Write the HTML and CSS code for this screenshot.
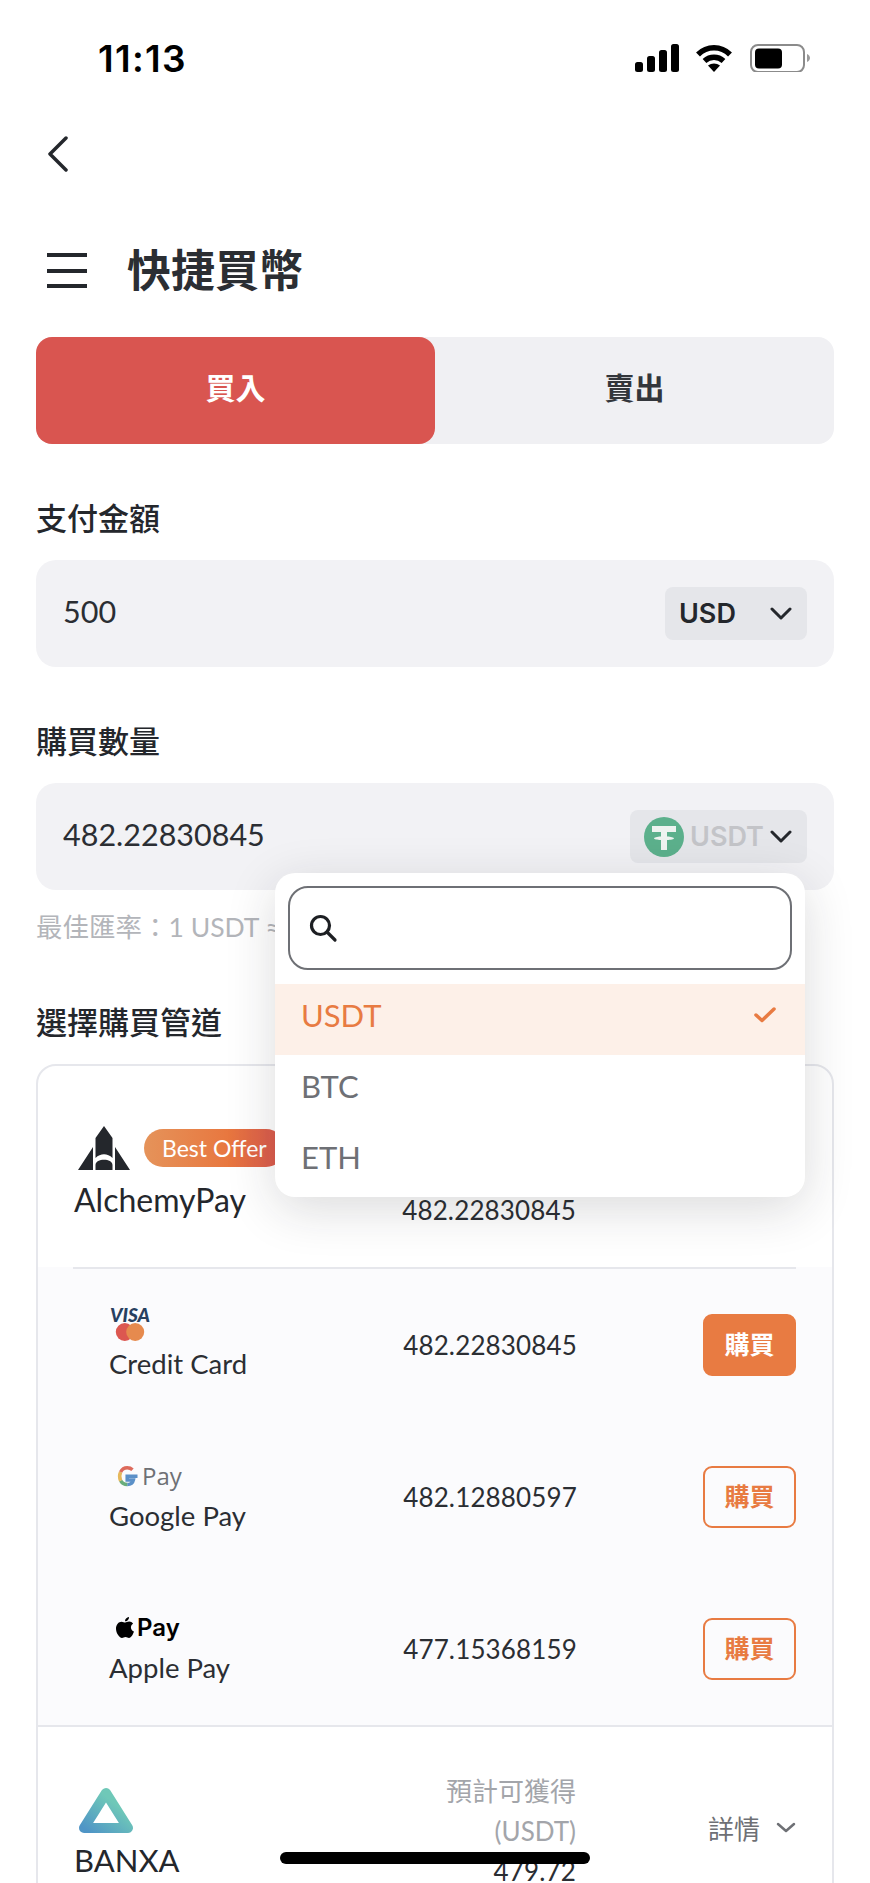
FILE: index.html
```html
<!DOCTYPE html>
<html lang="zh-Hant">
<head>
    <meta charset="UTF-8">
    <meta name="viewport" content="width=device-width, initial-scale=1.0">
    <title>快捷買幣</title>
    <link rel="stylesheet" href="styles.css">
</head>
<body>
<div class="phone">

    <div class="status">
        <span class="time">11:13</span>
        <div class="status-icons">
            <svg width="44" height="28" viewBox="0 0 44 28"><rect x="0" y="18" width="8" height="10" rx="2.500"/><rect x="12" y="12" width="8" height="16" rx="2.500"/><rect x="24" y="6" width="8" height="22" rx="2.500"/><rect x="36" y="0" width="8" height="28" rx="2.500"/></svg>
            <svg width="38" height="28" viewBox="0 0 38 28"><path d="M3 10.500C12 1.500 26 1.500 35 10.500" fill="none" stroke="#000" stroke-width="5.500"/><path d="M9.500 17c5.500-5 13.500-5 19 0" fill="none" stroke="#000" stroke-width="5.500"/><path d="M13 21.500c3.500-2.800 8.500-2.800 12 0L19 28z"/></svg>
            <svg width="62" height="28" viewBox="0 0 62 28"><rect x="2" y="1" width="53" height="27" rx="7" fill="none" stroke="#8b8b8b" stroke-width="2"/><rect x="6" y="4.500" width="27" height="20" rx="4"/><path d="M58 10c2 1 3 2.500 3 4s-1 3-3 4z" fill="#9a9a9a"/></svg>
        </div>
    </div>

    <div class="back">
        <svg width="22" height="36" viewBox="0 0 22 36"><path d="M19 2L3 18l16 16" fill="none" stroke="#24272c" stroke-width="3.500" stroke-linecap="round" stroke-linejoin="round"/></svg>
    </div>

    <div class="title-row">
        <div class="burger"><span></span><span></span><span></span></div>
        <h1>快捷買幣</h1>
    </div>

    <div class="tabs">
        <div class="tab active">買入</div>
        <div class="tab">賣出</div>
    </div>

    <div class="label">支付金額</div>
    <div class="field">
        <span class="value">500</span>
        <div class="picker usd">
            <b>USD</b>
            <svg class="chev" width="22" height="14" viewBox="0 0 22 14"><path d="M2 2l9 9 9-9" fill="none" stroke="#24272c" stroke-width="3" stroke-linecap="round" stroke-linejoin="round"/></svg>
        </div>
    </div>

    <div class="label second">購買數量</div>
    <div class="field">
        <span class="value">482.22830845</span>
        <div class="picker usdt">
            <svg width="40" height="40" viewBox="0 0 40 40"><circle cx="20" cy="20" r="20" fill="#5cb08c"/><path d="M8 9h24v6H23v4.500c4 .2 7 .9 7 1.800s-3 1.600-7 1.800V33h-6v-9.900c-4-.2-7-.9-7-1.800s3-1.600 7-1.800V15H8z" fill="#eef3f0"/></svg>
            <b>USDT</b>
            <svg class="chev" width="22" height="14" viewBox="0 0 22 14"><path d="M2 2l9 9 9-9" fill="none" stroke="#24272c" stroke-width="3" stroke-linecap="round" stroke-linejoin="round"/></svg>
        </div>
    </div>
    <div class="rate">最佳匯率：1 USDT ≈ 1.0369 USD</div>

    <div class="label third">選擇購買管道</div>

    <div class="card">
        <div class="provider first">
            <div class="brand">
                <div class="logo-line">
                    <svg width="52" height="44" viewBox="0 0 52 44"><path d="M26 0l8.500 12v20c-5-5-12-5-17 0V12z" fill="#24272c"/><path d="M17.500 44v-5c0-7 17-7 17 0v5zM15 21v23H0zM37 21v23h15z" fill="#24272c"/></svg>
                    <span class="badge">Best Offer</span>
                </div>
                <div class="brand-name">AlchemyPay</div>
            </div>
            <div class="amount">
                <span class="muted">預計可獲得</span>
                <span class="muted">(USDT)</span>
                <span class="num">482.22830845</span>
            </div>
            <div class="detail"></div>
        </div>

        <div class="methods">
            <div class="method">
                <div class="method-name">
                    <div class="method-logo visa">
                        <i>VISA</i>
                        <svg width="30" height="19" viewBox="0 0 30 19"><circle cx="9.500" cy="9.500" r="9.500" fill="#dc5750"/><circle cx="20.500" cy="9.500" r="9.500" fill="#e68a4e"/></svg>
                    </div>
                    <span>Credit Card</span>
                </div>
                <span class="num">482.22830845</span>
                <button class="buy solid">購買</button>
            </div>
            <div class="method">
                <div class="method-name">
                    <div class="method-logo">
                        <svg width="24" height="24" viewBox="0 0 24 24"><path d="M22.500 12.200h-10.300v3.800h6.200c-.6 2.900-3 4.500-6.200 4.500" fill="none" stroke="#5b90c8" stroke-width="3.500"/><path d="M12.200 20.500c-2.900 0-5.300-1.500-6.600-3.800" fill="none" stroke="#69ad7c" stroke-width="3.500"/><path d="M5.600 16.700c-1.300-2.700-1.300-5.800 0-8.700" fill="none" stroke="#e6b85c" stroke-width="3.500"/><path d="M5.600 8c1.400-2.700 3.800-4.200 6.600-4.200 2.100 0 3.900.7 5.300 2" fill="none" stroke="#dd6a5c" stroke-width="3.500"/></svg>
                        <span class="gpay">Pay</span>
                    </div>
                    <span>Google Pay</span>
                </div>
                <span class="num">482.12880597</span>
                <button class="buy">購買</button>
            </div>
            <div class="method">
                <div class="method-name">
                    <div class="method-logo apple">
                        <svg width="18" height="22" viewBox="0 0 18 22"><path d="M13 0c.2 1.800-1.500 4.500-4 4.300C8.800 2.300 10.700.3 13 0zM9.200 5.600c1 0 2.200-1 4-1 1.500 0 3 .8 3.900 2.100-3.300 1.900-2.700 6.500.9 7.800-.9 2.500-2.700 6.500-5 6.500-1.300 0-1.900-.9-3.500-.9s-2.200.9-3.500.9C3.200 21 0 15.800 0 11.800 0 7.500 2.700 4.700 5.500 4.700c1.500 0 2.800.9 3.700.9z"/></svg>
                        <span class="apay">Pay</span>
                    </div>
                    <span>Apple Pay</span>
                </div>
                <span class="num">477.15368159</span>
                <button class="buy">購買</button>
            </div>
        </div>

        <div class="provider">
            <div class="brand">
                <div class="logo-line">
                    <svg width="56" height="46" viewBox="0 0 56 46">
                        <defs><linearGradient id="banxa" x1="0" y1="1" x2="0.700" y2="0.300"><stop offset="0" stop-color="#4f95c6"/><stop offset="1" stop-color="#6fc8b8"/></linearGradient></defs>
                        <path d="M28 6L50 41H6z" fill="none" stroke="url(#banxa)" stroke-width="10" stroke-linejoin="round"/>
                    </svg>
                </div>
                <div class="brand-name banxa">BANXA</div>
            </div>
            <div class="amount">
                <span class="muted">預計可獲得</span>
                <span class="muted">(USDT)</span>
                <span class="num">479.72</span>
            </div>
            <div class="detail">詳情
                <svg width="20" height="12" viewBox="0 0 20 12"><path d="M2 2l8 7 8-7" fill="none" stroke="#6e7075" stroke-width="2.500" stroke-linecap="round" stroke-linejoin="round"/></svg>
            </div>
        </div>
    </div>

    <!-- currency dropdown, open over the form -->
    <div class="dropdown">
        <div class="search">
            <svg width="30" height="30" viewBox="0 0 30 30"><circle cx="12.500" cy="12.500" r="9" fill="none" stroke="#1d1f23" stroke-width="3.200"/><path d="M19 19l8 8" stroke="#1d1f23" stroke-width="3.200" stroke-linecap="round"/></svg>
        </div>
        <div class="option selected"><span>USDT</span>
            <svg width="22" height="16" viewBox="0 0 22 16"><path d="M2 8l6 5.500L20 2" fill="none" stroke="#e87b42" stroke-width="3.500" stroke-linecap="round" stroke-linejoin="round"/></svg>
        </div>
        <div class="option"><span>BTC</span></div>
        <div class="option"><span>ETH</span></div>
    </div>

    <div class="home-bar"></div>
</div>
</body>
</html>
```

FILE: styles.css
```css
* {
    box-sizing: border-box;
}

html, body {
    margin: 0;
    padding: 0;
    background: #fff;
}

body {
    font-family: Lato, "Noto Sans CJK TC", sans-serif;
    color: #24272c;
}

.phone {
    position: relative;
    width: 870px;
    height: 1883px;
    overflow: hidden;
    padding: 0 36px;
}

/* status bar */
.status {
    height: 116px;
    padding: 40px 23px 0 62px;
    display: flex;
    justify-content: space-between;
    align-items: flex-start;
}

.time {
    font-family: Inter, sans-serif;
    font-size: 37px;
    font-weight: 600;
    line-height: 38px;
    color: #000;
    letter-spacing: 1.3px;
}

.status-icons {
    display: flex;
    align-items: center;
    gap: 16px;
    padding-top: 4px;
}

.back {
    height: 110px;
    padding: 20px 0 0 11px;
}

.back svg {
    display: block;
}

.title-row {
    height: 111px;
    display: flex;
    align-items: flex-start;
    gap: 40px;
    padding-left: 11px;
}

.burger {
    width: 40px;
    height: 35px;
    margin-top: 27px;
    display: flex;
    flex-direction: column;
    justify-content: space-between;
}

.burger span {
    height: 4px;
    background: #24272c;
}

h1 {
    margin: 12px 0 0;
    font-size: 44px;
    line-height: 64px;
    font-weight: 600;
    color: #2b2e33;
}

/* buy / sell */
.tabs {
    display: flex;
    height: 107px;
    background: #f0f0f3;
    border-radius: 16px;
}

.tab {
    flex: 1;
    display: flex;
    align-items: center;
    justify-content: center;
    padding-bottom: 10px;
    font-size: 30px;
    font-weight: 600;
    border-radius: 16px;
    color: #33363b;
}

.tab.active {
    background: #d95550;
    color: #fff;
}

.label {
    font-size: 31px;
    font-weight: 500;
    line-height: 44px;
    margin: 52px 0 20px;
}

.label.second {
    margin-top: 52px;
}

.label.third {
    margin: 0 0 20px;
}

.field {
    height: 107px;
    background: #f2f2f5;
    border-radius: 20px;
    padding: 0 27px;
    display: flex;
    align-items: center;
    justify-content: space-between;
}

.value {
    font-size: 30.5px;
    color: #2b2e33;
    margin-top: -6px;
}

.picker {
    display: flex;
    align-items: center;
    height: 53px;
    background: #e5e6ea;
    border-radius: 8px;
    font-size: 27px;
    font-family: Inter, sans-serif;
}

.picker b {
    font-weight: 600;
}

.usd {
    width: 142px;
    padding: 0 15px 0 14px;
    justify-content: space-between;
    color: #24272c;
}

.usdt {
    width: 177px;
    padding: 0 15px 0 14px;
    justify-content: space-between;
    color: #c3c4c8;
}

.chev {
    display: block;
}

.rate {
    font-size: 26.5px;
    color: #b3b5ba;
    line-height: 38px;
    margin: 18px 0 54px;
}

/* provider list */
.card {
    border: 2px solid #e6e7ec;
    border-radius: 20px;
    background: #fff;
}

.provider {
    display: flex;
    align-items: center;
    padding: 0 36px;
    height: 201px;
}

.brand {
    width: 260px;
    margin-top: 12px;
}

.logo-line {
    display: flex;
    align-items: center;
    gap: 14px;
    padding-left: 4px;
}

.badge {
    height: 38px;
    padding: 0 18px;
    border-radius: 19px;
    background: linear-gradient(90deg, #e5935a, #e8773f 60%, #d95550);
    color: #fff;
    font-size: 23px;
    line-height: 38px;
    white-space: nowrap;
}

.brand-name {
    font-size: 32px;
    line-height: 40px;
    margin-top: 10px;
    color: #24272c;
}

.brand-name.banxa {
    font-size: 31px;
    margin-top: 7px;
}

.amount {
    width: 242px;
    margin-top: 6px;
    display: flex;
    flex-direction: column;
    align-items: flex-end;
    font-size: 26px;
    line-height: 40px;
}

.muted {
    color: #a3a5aa;
}

.num {
    font-size: 26px;
    letter-spacing: 0.15px;
    color: #2b2e33;
    text-align: right;
}

.detail {
    flex: 1;
    display: flex;
    justify-content: flex-end;
    align-items: center;
    gap: 16px;
    font-size: 26px;
    color: #6e7075;
}

.methods {
    background: #fbfbfd;
    border-bottom: 2px solid #e6e7ec;
}

.methods::before {
    content: "";
    display: block;
    margin: 0 36px 0 35px;
    height: 2px;
    background: #e6e7ec;
}

.method {
    height: 152px;
    display: flex;
    align-items: center;
    padding: 0 36px 0 71px;
}

.method-name {
    width: 225px;
    font-size: 27.5px;
    line-height: 38px;
    color: #2b2e33;
}

.method-name span {
    display: block;
}

.method-logo {
    height: 34px;
    display: flex;
    align-items: center;
    gap: 3px;
    padding-left: 6px;
    margin-bottom: 4px;
}

.method-logo.apple {
    padding-left: 7px;
}

.method .num {
    width: 243px;
}

.gpay {
    font-family: "Open Sans", sans-serif;
    font-size: 24px;
    line-height: 34px;
    color: #6e7075;
}

.apay {
    font-family: Inter, sans-serif;
    font-size: 24px;
    line-height: 34px;
    font-weight: 600;
    color: #000;
}

.visa {
    flex-direction: column;
    align-items: flex-start;
    gap: 0;
    padding-left: 1px;
}

.visa i {
    font-size: 19px;
    line-height: 16px;
    font-weight: 900;
    color: #27405f;
    font-style: italic;
}

.visa svg {
    margin-left: 5px;
}

.buy {
    margin-left: auto;
    width: 93px;
    height: 62px;
    border: 2px solid #e87b42;
    border-radius: 9px;
    background: transparent;
    color: #e87b42;
    font-family: inherit;
    font-size: 25px;
    font-weight: 600;
    padding: 0 0 4px;
}

.buy.solid {
    background: #e87b42;
    color: #fff;
}

/* currency dropdown */
.dropdown {
    position: absolute;
    left: 275px;
    top: 873px;
    width: 530px;
    height: 324px;
    background: #fff;
    border-radius: 20px;
    padding-top: 13px;
    box-shadow: 0 12px 50px rgba(30, 32, 40, 0.16);
}

.search {
    height: 84px;
    margin: 0 13px 14px 13px;
    border: 2px solid #6e7075;
    border-radius: 20px;
    display: flex;
    align-items: center;
    padding-left: 18px;
}

.option {
    height: 71px;
    display: flex;
    align-items: center;
    justify-content: space-between;
    padding: 0 29px 0 26px;
    font-size: 31px;
    color: #6e7075;
}

.option span {
    margin-top: -10px;
}

.option svg {
    margin-top: -10px;
}

.option.selected {
    background: #fdf0e8;
    color: #e87b42;
}

.home-bar {
    position: absolute;
    left: 280px;
    top: 1852px;
    width: 310px;
    height: 12px;
    border-radius: 6px;
    background: #000;
}
```
